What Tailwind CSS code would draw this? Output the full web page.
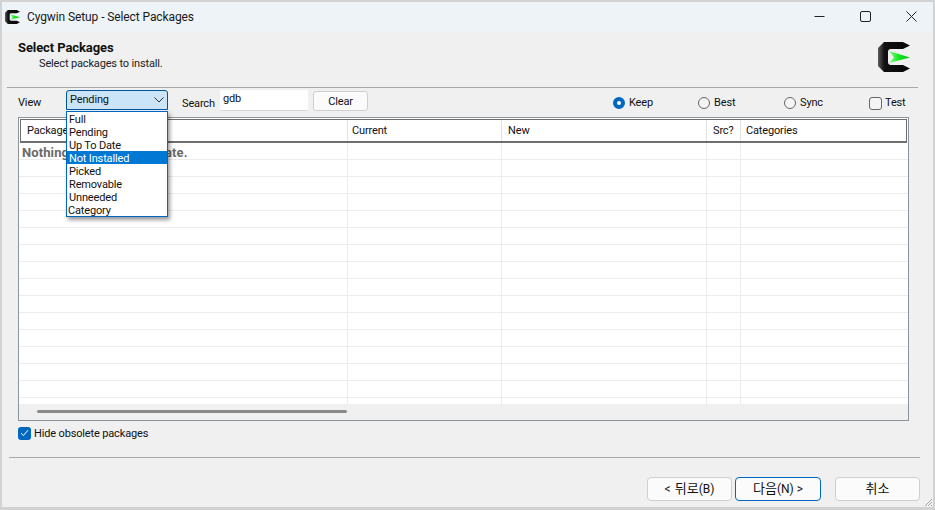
<!DOCTYPE html>
<html>
<head>
<meta charset="utf-8">
<script src="https://cdn.jsdelivr.net/npm/@tailwindcss/browser@4"></script>
</head>
<body class="m-0 bg-[#d2d2d2]">
<svg width="0" height="0" class="absolute">
  <defs>
    <linearGradient id="g" x1="0" y1="0" x2="1" y2="0"><stop offset="0" stop-color="#8dff9a"/><stop offset="0.45" stop-color="#14e81e"/><stop offset="1" stop-color="#0fc015"/></linearGradient>
    <linearGradient id="b" x1="0" y1="0" x2="1" y2="0"><stop offset="0" stop-color="#5a5a5a"/><stop offset="0.2" stop-color="#111"/><stop offset="1" stop-color="#050505"/></linearGradient>
    <symbol id="cyg" viewBox="0 0 32 30">
      <path d="M6 0H25L32 3.5L25 7H13Q10 7 10 10V20Q10 23 13 23H25L32 26.5L25 30H6L0 24V6Z" fill="url(#b)"/>
      <path d="M11 9L32 15.5L11 21L16 15.5Z" fill="url(#g)"/>
    </symbol>
  </defs>
</svg>
<div class="relative w-[935px] h-[510px] overflow-hidden font-['Roboto','Noto_Sans_CJK_KR',sans-serif] text-[11px] tracking-[-0.15px] leading-[14px] text-[#111] bg-[#f0f0f0] border-l-2 border-r-2 border-t-2 border-b-[3px] border-[#d2d2d2] flex flex-col">

  <!-- title bar -->
  <div class="h-[29px] shrink-0 bg-[#eef3f7] flex items-center pl-[3px]">
    <svg width="15" height="14" class="shrink-0"><use href="#cyg"/></svg>
    <span class="ml-[7px] text-[12px] tracking-[-0.1px] text-[#1a1a1a]">Cygwin Setup - Select Packages</span>
    <div class="ml-auto flex items-center pr-[16px] gap-[35px] text-[#222] -mt-[1px]">
      <svg width="11" height="11" viewBox="0 0 11 11"><path d="M0.5 5.5H10.5" stroke="currentColor"/></svg>
      <svg width="11" height="11" viewBox="0 0 11 11"><rect x="0.5" y="0.5" width="10" height="10" rx="1.5" fill="none" stroke="currentColor"/></svg>
      <svg width="11" height="11" viewBox="0 0 11 11"><path d="M0.5 0.5L10.5 10.5M10.5 0.5L0.5 10.5" stroke="currentColor"/></svg>
    </div>
  </div>

  <!-- header -->
  <div class="h-[57px] shrink-0 relative pl-[11px] pt-[10px] border-b border-[#a8a8a8] ml-[5px] mr-[15px]">
    <div class="font-bold text-[13px] tracking-[-0.1px] leading-[14px] text-[#111]">Select Packages</div>
    <div class="ml-[21px] mt-[2px] text-[#222]">Select packages to install.</div>
    <svg width="32" height="30" class="absolute right-[8px] top-[11px]"><use href="#cyg"/></svg>
  </div>

  <!-- toolbar -->
  <div class="h-[29px] shrink-0 flex items-center pl-[16px] pr-[27px] relative">
    <span class="w-[48px] pt-[1px]">View</span>
    <div class="w-[102px] h-[20px] -mt-[6px] pt-[1px] bg-[#cce4f7] border border-[#005499] rounded-t-[3px] flex items-center justify-between pl-[3px] pr-[3px]">
      <span>Pending</span>
      <svg width="10" height="6" viewBox="0 0 10 6"><path d="M0.5 0.5L5 5L9.5 0.5" fill="none" stroke="#333"/></svg>
    </div>
    <span class="ml-[14px] w-[38px] pt-[3px]">Search</span>
    <div class="w-[88px] h-[21px] -mt-[4px] bg-white border-b border-[#d8d8d8] rounded-[2px] pl-[3px] pt-[2px]">gdb</div>
    <div class="ml-[5px] w-[55px] h-[20px] -mt-[3px] pt-[1px] bg-[#fbfbfb] border border-[#cfcfcf] rounded-[3px] flex items-center justify-center">Clear</div>
    <div class="ml-[245px] flex items-center gap-[4px] w-[85px] pt-[1px]">
      <span class="w-[12px] h-[12px] rounded-full border-[4px] border-[#0067c0] bg-white"></span><span>Keep</span>
    </div>
    <div class="flex items-center gap-[4px] w-[86px] pt-[1px]">
      <span class="w-[12px] h-[12px] rounded-full border border-[#666] bg-[#f5f5f5]"></span><span>Best</span>
    </div>
    <div class="flex items-center gap-[4px] w-[85px] pt-[1px]">
      <span class="w-[12px] h-[12px] rounded-full border border-[#666] bg-[#f5f5f5]"></span><span>Sync</span>
    </div>
    <div class="flex items-center gap-[3px] pt-[1px]">
      <span class="w-[13px] h-[13px] rounded-[3px] border border-[#666] bg-[#f5f5f5]"></span><span>Test</span>
    </div>
  </div>

  <!-- table -->
  <div class="ml-[16px] w-[891px] h-[304px] shrink-0 border border-[#8c949a] bg-white flex flex-col">
    <div class="mx-px mt-px h-[24px] shrink-0 border border-[#6e6e6e] border-b-2 bg-white grid grid-cols-[326px_154px_205px_34px_1fr] items-center">
      <span class="pl-[6px] pt-[1px]">Package</span>
      <span class="pl-[4px] pt-[1px] border-l border-[#e2e2e2] h-full flex items-center">Current</span>
      <span class="pl-[6px] pt-[1px] border-l border-[#e2e2e2] h-full flex items-center">New</span>
      <span class="pl-[6px] pt-[1px] border-l border-[#e2e2e2] h-full flex items-center">Src?</span>
      <span class="pl-[5px] pt-[1px] border-l border-[#e2e2e2] h-full flex items-center">Categories</span>
    </div>
    <div class="flex-1 relative pl-[3px] pt-[3px] font-bold text-[13px] tracking-[0.1px] text-[#6a6a6a] bg-[repeating-linear-gradient(to_bottom,transparent_0,transparent_16px,#ececec_16px,#ececec_17px)]">
      Nothing to install or update.
      <div class="absolute inset-0 pointer-events-none grid grid-cols-[328px_154px_205px_34px_1fr]">
        <span></span>
        <span class="border-l border-[#ececec]"></span>
        <span class="border-l border-[#ececec]"></span>
        <span class="border-l border-[#ececec]"></span>
        <span class="border-l border-[#ececec]"></span>
      </div>
    </div>
    <div class="h-[16px] shrink-0 bg-[#f0f0f0] pl-[18px] pt-[6px] relative">
      <div class="w-[310px] h-[3px] rounded-full bg-[#8a8a8a]"></div>
    </div>
  </div>

  <!-- hide obsolete -->
  <div class="ml-[16px] mt-[5px] flex items-center gap-[3px] h-[14px]">
    <span class="w-[13px] h-[13px] rounded-[3px] bg-[#0067c0] flex items-center justify-center">
      <svg width="9" height="8" viewBox="0 0 9 8"><path d="M1 4.2L3.4 6.5L8 1.2" fill="none" stroke="#fff"/></svg>
    </span>
    <span class="pt-[1px]">Hide obsolete packages</span>
  </div>

  <!-- divider -->
  <div class="ml-[7px] mr-[13px] mt-[17px] border-t border-[#a8a8a8]"></div>

  <!-- buttons -->
  <div class="mt-[19px] flex justify-end pr-[13px] text-[12px] tracking-[0px]">
    <div class="w-[85px] h-[24px] bg-[#fbfbfb] border border-[#cfcfcf] rounded-[4px] flex items-center justify-center">&lt;<span class="text-[13px] ml-[4px]">뒤로</span>(B)</div>
    <div class="ml-[3px] w-[86px] h-[24px] bg-[#fbfbfb] border border-[#0067c0] rounded-[4px] flex items-center justify-center"><span class="text-[13px]">다음</span>(N) &gt;</div>
    <div class="ml-[14px] w-[85px] h-[24px] bg-[#fbfbfb] border border-[#cfcfcf] rounded-[4px] flex items-center justify-center"><span class="text-[13px]">취소</span></div>
  </div>

  <!-- open dropdown list -->
  <div class="absolute left-[64px] top-[109px] w-[102px] h-[106px] bg-white border border-[#0067c0] shadow-[2px_3px_4px_rgba(0,0,0,0.4)] flex flex-col pl-[2px] text-[#111] leading-[15px]">
    <div class="h-[13px]">Full</div>
    <div class="h-[13px]">Pending</div>
    <div class="h-[13px]">Up To Date</div>
    <div class="h-[13px] -ml-[2px] pl-[2px] bg-[#0078d4] text-white">Not Installed</div>
    <div class="h-[13px]">Picked</div>
    <div class="h-[13px]">Removable</div>
    <div class="h-[13px]">Unneeded</div>
    <div class="h-[13px] -ml-[1px]">Category</div>
  </div>

  <!-- resize grip -->
  <svg width="10" height="10" viewBox="0 0 10 10" class="absolute right-0 bottom-0"><path d="M9 2L2 9M9 5L5 9M9 8L8 9" stroke="#a8a8a8" fill="none"/></svg>
</div>
</body>
</html>
